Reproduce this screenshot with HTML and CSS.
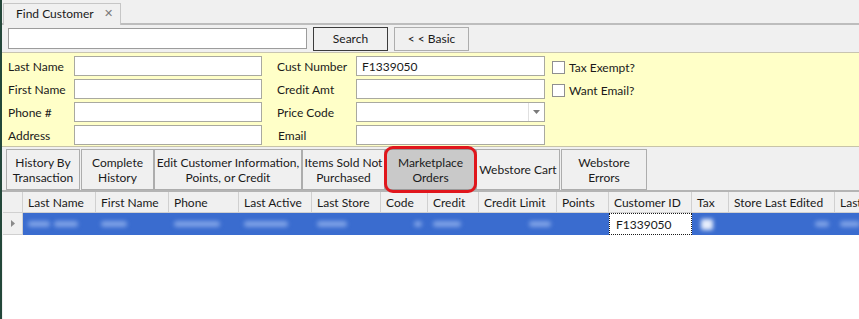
FILE: index.html
```html
<!DOCTYPE html>
<html>
<head>
<meta charset="utf-8">
<link rel="stylesheet" href="styles.css">
</head>
<body>
<div class="app">
  <div class="edge"></div>
  <div class="main">
    <div class="tabbar">
      <div class="tab"><span>Find Customer</span><span class="close">✕</span></div>
    </div>
    <div class="searchrow">
      <input class="search-input" type="text">
      <button class="btn btn-search">Search</button>
      <button class="btn btn-basic">&lt; &lt; Basic</button>
    </div>
    <div class="panel">
      <label class="lbl">Last Name</label>
      <div class="field"></div>
      <label class="lbl lbl2">Cust Number</label>
      <div class="field">F1339050</div>
      <div class="check"><span class="box"></span>Tax Exempt?</div>

      <label class="lbl">First Name</label>
      <div class="field"></div>
      <label class="lbl lbl2">Credit Amt</label>
      <div class="field"></div>
      <div class="check"><span class="box"></span>Want Email?</div>

      <label class="lbl">Phone #</label>
      <div class="field"></div>
      <label class="lbl lbl2">Price Code</label>
      <div class="field select"><span class="arrow"><svg width="7" height="4" viewBox="0 0 7 4"><path d="M0 0h7L3.5 4z" fill="#7a7a7a"/></svg></span></div>
      <div></div>

      <label class="lbl">Address</label>
      <div class="field"></div>
      <label class="lbl lbl2 lbl-email">Email</label>
      <div class="field"></div>
      <div></div>
    </div>
    <div class="toolbar">
      <button class="tbtn w1">History By<br>Transaction</button>
      <button class="tbtn w2">Complete<br>History</button>
      <button class="tbtn w3">Edit Customer Information,<br>Points, or Credit</button>
      <button class="tbtn w4">Items Sold Not<br>Purchased</button>
      <button class="tbtn w5 active">Marketplace<br>Orders</button>
      <button class="tbtn w6">Webstore Cart</button>
      <button class="tbtn w7">Webstore<br>Errors</button>
    </div>
    <div class="grid">
      <div class="hrow">
        <div class="hc c0"></div>
        <div class="hc c1">Last Name</div>
        <div class="hc c2">First Name</div>
        <div class="hc c3">Phone</div>
        <div class="hc c4">Last Active</div>
        <div class="hc c5">Last Store</div>
        <div class="hc c6">Code</div>
        <div class="hc c7">Credit</div>
        <div class="hc c8">Credit Limit</div>
        <div class="hc c9">Points</div>
        <div class="hc c10">Customer ID</div>
        <div class="hc c11">Tax</div>
        <div class="hc c12">Store Last Edited</div>
        <div class="hc c13">Last</div>
      </div>
      <div class="drow">
        <div class="dc c0 rowhead"><svg width="4" height="7" viewBox="0 0 4 7"><path d="M0 0l4 3.5L0 7z" fill="#8a8a8a"/></svg></div>
        <div class="sel">
          <div class="dc c1"><span class="blur b1"></span><span class="blur b2"></span></div>
          <div class="dc c2"><span class="blur b3"></span></div>
          <div class="dc c3"><span class="blur b4"></span></div>
          <div class="dc c4"><span class="blur b5"></span></div>
          <div class="dc c5"><span class="blur b6"></span></div>
          <div class="dc c6 right"><span class="blur b7"></span></div>
          <div class="dc c7"><span class="blur b8"></span></div>
          <div class="dc c8 right"><span class="blur b9"></span></div>
          <div class="dc c9"></div>
        </div>
        <div class="dc c10 current">F1339050</div>
        <div class="sel">
          <div class="dc c11"><span class="blur chk"></span></div>
          <div class="dc c12 right"><span class="blur b10"></span></div>
          <div class="dc c13"><span class="blur b11"></span></div>
        </div>
      </div>
    </div>
  </div>
</div>
</body>
</html>
```

FILE: styles.css
```css
* { box-sizing: border-box; }
html, body { margin: 0; padding: 0; }
body {
  width: 859px;
  height: 319px;
  overflow: hidden;
  background: #f0f0f0;
  font-family: Lato, "Noto Sans", sans-serif;
  font-size: 12px;
  color: #1a1a1a;
}
.app { display: flex; height: 319px; }
.edge { width: 2px; background: #23473a; flex: none; }
.main { flex: 1; display: flex; flex-direction: column; min-width: 0; background: #f0f0f0; }

.tabbar {
  height: 25px;
  padding: 3px 0 0 1px;
  border-bottom: 2px solid #bdbdbd;
  display: flex;
}
.tab {
  width: 118px;
  height: 22px;
  border: 1px solid #c6c6c6;
  border-bottom: none;
  background: #f0f0f0;
  display: flex;
  align-items: center;
  padding: 0 0 3px 12px;
  gap: 10px;
  white-space: nowrap;
  margin-bottom: -2px;
}
.close { font-size: 11px; color: #7a7a7a; }

.searchrow {
  height: 28px;
  display: flex;
  align-items: center;
  padding: 0 0 0 6px;
  border-bottom: 1px solid #c8c4b0;
}
.search-input {
  width: 299px;
  height: 21px;
  border: 1px solid #9c9c9c;
  background: #fff;
  margin: 0 6px 0 0;
  padding: 0;
}
.btn {
  height: 24px;
  font-family: inherit;
  font-size: 12px;
  color: #1a1a1a;
  background: #f0f0f0;
  padding: 0;
  margin: 0;
}
.btn-search { width: 75px; border: 1px solid #3c3c3c; margin-right: 6px; }
.btn-basic { width: 75px; border: 1px solid #adadad; }

.panel {
  background: #ffffc8;
  display: grid;
  grid-template-columns: 66px 188px 15px 79px 189px 1fr;
  grid-auto-rows: 20px;
  row-gap: 3px;
  padding: 3px 0 1px 6px;
  border-bottom: 1px solid #c8c4a8;
  align-items: center;
}
.lbl2 { grid-column: 4; }
.lbl-email { padding-left: 1px; }
.field {
  height: 20px;
  border: 1px solid #a9a9a0;
  background: #fff;
  padding: 2px 0 0 5px;
  position: relative;
}
.select .arrow {
  position: absolute;
  right: 0;
  top: 0;
  width: 16px;
  height: 18px;
  border-left: 1px solid #e0e0e0;
  display: flex;
  align-items: center;
  justify-content: center;
}
.check {
  display: flex;
  align-items: center;
  padding-left: 7px;
  margin-top: 3px;
  white-space: nowrap;
}
.box {
  width: 13px;
  height: 13px;
  border: 1px solid #8f8f8f;
  background: #fff;
  margin-right: 4px;
}

.toolbar {
  height: 45px;
  display: flex;
  align-items: flex-start;
  padding: 2px 0 0 4px;
  border-bottom: 2px solid #b4b4b4;
}
.tbtn {
  height: 41px;
  border: 1px solid #adadad;
  background: #f0f0f0;
  font-family: inherit;
  font-size: 12px;
  line-height: 15px;
  color: #1a1a1a;
  padding: 0;
  margin: 0;
  text-align: center;
  white-space: nowrap;
}
.w1 { width: 74px; margin-right: 1px; }
.w2 { width: 73px; }
.w3 { width: 148px; }
.w4 { width: 83px; }
.w5 { width: 91px; }
.w6 { width: 84px; margin-right: 1px; }
.w7 { width: 86px; }
.tbtn.active {
  background: #c9c9c9;
  border-color: #9a9a9a;
  position: relative;
}
.tbtn.active::after {
  content: "";
  position: absolute;
  left: -2px;
  right: -2px;
  top: -4px;
  bottom: -4px;
  border: 3px solid #e0161c;
  border-radius: 9px;
}

.grid { flex: 1; background: #fff; margin-left: 1px; }
.hrow, .drow { display: flex; }
.hrow { height: 21px; background: #f0f0f0; }
.hc {
  flex: none;
  height: 21px;
  border-right: 1px solid #d0d0d0;
  border-bottom: 1px solid #d0d0d0;
  padding: 3px 0 0 5px;
  white-space: nowrap;
  overflow: hidden;
}
.c0 { width: 20px; }
.c1 { width: 73px; }
.c2 { width: 73px; }
.c3 { width: 70px; }
.c4 { width: 73px; }
.c5 { width: 69px; }
.c6 { width: 47px; }
.c7 { width: 51px; }
.c8 { width: 78px; }
.c9 { width: 52px; }
.c10 { width: 83px; }
.c11 { width: 37px; }
.c12 { width: 106px; }
.c13 { width: 30px; border-right: none; }

.drow { height: 22px; }
.sel {
  display: flex;
  background: #3a6ccf;
  filter: blur(0.6px);
}
.dc {
  flex: none;
  height: 22px;
  display: flex;
  align-items: center;
  padding-left: 5px;
  gap: 4px;
  white-space: nowrap;
  overflow: hidden;
}
.dc.right { justify-content: flex-end; padding-right: 6px; }
.rowhead {
  background: #f0f0f0;
  border-right: 1px solid #d0d0d0;
  border-bottom: 1px solid #d0d0d0;
  padding-left: 8px;
}
.current {
  background: #fff;
  border: 1px dotted #1a1a1a;
  padding-left: 6px;
}
.blur {
  display: inline-block;
  height: 6px;
  background: #7ea1e6;
  border-radius: 3px;
  filter: blur(2px);
}
.b1 { width: 22px; }
.b2 { width: 24px; }
.b3 { width: 26px; }
.b4 { width: 46px; }
.b5 { width: 44px; }
.b6 { width: 30px; }
.b7 { width: 8px; }
.b8 { width: 28px; }
.b9 { width: 22px; }
.b10 { width: 14px; }
.b11 { width: 20px; }
.chk { width: 12px; height: 11px; background: #e6edfb; border-radius: 2px; margin-left: 4px; }
```
